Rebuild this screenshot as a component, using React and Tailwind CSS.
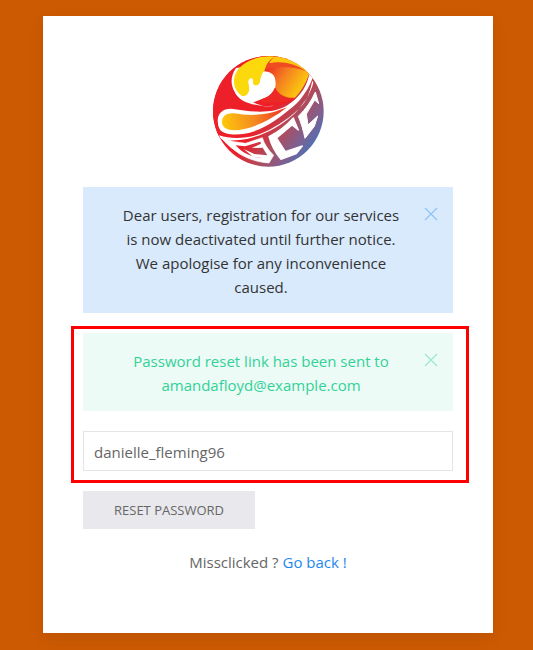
import { useState } from "react";

function Logo() {
  return (
    <svg viewBox="0 0 333 333" className="size-[111px]" role="img" aria-label="GCC logo">
      <defs>
        <linearGradient id="base" gradientUnits="userSpaceOnUse" x1="125" y1="125" x2="310" y2="265">
          <stop offset="0.25" stopColor="#ed1f29" />
          <stop offset="0.55" stopColor="#b04b5b" />
          <stop offset="0.8" stopColor="#7f6090" />
          <stop offset="1" stopColor="#4a72b8" />
        </linearGradient>
        <linearGradient id="flame" gradientUnits="userSpaceOnUse" x1="165" y1="45" x2="260" y2="105">
          <stop offset="0" stopColor="#ee3a24" />
          <stop offset="0.45" stopColor="#f58220" />
          <stop offset="1" stopColor="#fcc60e" />
        </linearGradient>
        <linearGradient id="drop" gradientUnits="userSpaceOnUse" x1="30" y1="200" x2="215" y2="170">
          <stop offset="0" stopColor="#fdc60b" />
          <stop offset="0.5" stopColor="#f58a20" />
          <stop offset="1" stopColor="#ed3324" />
        </linearGradient>
        <clipPath id="disc">
          <circle cx="166" cy="166" r="166" />
        </clipPath>
      </defs>
      <g clipPath="url(#disc)">
        <rect width="333" height="333" fill="url(#base)" />
        <path d="M0 0 H200 L150 150 L60 240 L0 240Z" fill="#ed1f29" />
        <path d="M69 36 C44 72 56 112 92 132 C120 147 150 153 180 150 L200 110 L190 60 L120 30Z" fill="#fff" />
        <path d="M65 146 C105 150 130 150 150 150 C200 150 225 145 250 128 L215 110 L185 95 C178 115 163 124 146 129 C130 138 100 146 65 146Z" fill="#ed1f29" />
        <path d="M92 120 C110 134 130 148 165 150 C110 148 80 135 66 110Z" fill="#fff" />
        <path d="M150 46 C156 20 170 3 189 0 C230 0 266 22 289 52 C280 80 264 108 246 125 C218 138 180 138 150 134 C176 124 190 104 187 80 C184 60 170 48 150 46Z" fill="url(#flame)" />
        <path d="M189 0 C230 0 266 22 289 52 C254 26 212 16 168 22 Q177 6 189 0Z" fill="#fdc90e" />
        <path d="M168 22 C205 14 245 22 280 46 C238 30 196 30 157 40Z" fill="#f04b23" />
        <path d="M146 129 C172 122 182 108 187 95 C196 116 220 128 246 125 C222 139 190 142 146 140Z" fill="#ed2926" />
        <path d="M86 119 C60 101 54 66 78 37 C103 8 150 -3 187 2 C158 12 158 44 150 51 C140 66 144 78 138 84 C131 93 119 90 119 78 C120 70 114 64 108 71 C102 80 112 93 108 105 C104 119 93 123 86 119Z" fill="#fbd90c" />
        <path d="M108 79 C104 67 117 62 120 72 C117 84 124 93 137 86 C143 80 141 63 151 47 C174 44 191 60 187 85 C183 110 158 130 132 130 C115 130 98 126 92 121 C104 120 109 112 109 103 C111 95 108 90 108 79Z" fill="#fff" />
        <path d="M14 195 C14 169 34 156 60 159 C92 164 126 169 164 166 C209 163 234 144 258 118 C276 98 284 77 289 55 L299 65 C286 101 264 132 238 154 C202 183 166 213 120 227 C86 238 38 240 21 221 Q14 210 14 195Z" fill="#fff" />
        <path d="M27 198 C27 179 42 170 64 172 C103 179 158 182 222 154 C181 187 132 212 91 220 C53 227 27 220 27 198Z" fill="url(#drop)" />
        <path d="M18 238 C60 252 112 247 153 229 C193 210 239 181 269 146 C285 126 293 98 298 74 L301 80 C293 114 267 151 240 177 C206 207 160 234 117 245 C83 254 42 256 24 249Z" fill="#fff" />
        <g strokeLinejoin="round">
          <path d="M24 245 L62 257 L98 262 L148 245 C154 264 165 281 182 298 L168 321 C136 319 106 309 80 294 Q48 273 24 245Z" fill="#fff" stroke="#fff" strokeWidth="2" />
          <path d="M68 268 L96 271 L142 257 L144 263 L116 276 L149 275 L163 298 L124 294 L92 279 L118 301 L150 307 C114 304 86 290 68 268Z" fill="url(#base)" />
          <path d="M168 242 C198 227 222 207 241 186 L256 222 L237 207 L191 246 L217 287 L268 270 L250 293 L204 310 C188 292 175 268 168 242Z" fill="#fff" stroke="#fff" strokeWidth="4" />
          <path d="M256 181 C279 158 295 136 307 108 L317 143 L305 132 L280 174 L285 207 L314 180 L304 211 L276 247 C271 224 265 202 256 181Z" fill="#fff" stroke="#fff" strokeWidth="3" />
        </g>
      </g>
    </svg>
  );
}

function Alert({ tone, close, onClose, children }) {
  return (
    <div role="status" className={`flex items-start pt-4 pr-[15px] pb-[14px] pl-[29px] ${tone}`}>
      <p className="flex-1 pr-[10px] pl-1 text-center">{children}</p>
      <button type="button" aria-label="Close" onClick={onClose} className={`mt-1 ml-2 ${close}`}>
        <svg width="14" height="14" viewBox="0 0 14 14" fill="none" stroke="currentColor" strokeWidth="1.1">
          <path d="M1 1 13 13M13 1 1 13" />
        </svg>
      </button>
    </div>
  );
}

export default function App() {
  const [notice, setNotice] = useState(true);
  const [sent, setSent] = useState(true);
  return (
    <div className="min-h-screen bg-[#cc5a02] py-4 pr-10 pl-[43px] font-['Open_Sans','Noto_Sans',sans-serif] text-[15px] leading-6 text-[#666]">
      <main className="mx-auto max-w-[450px] bg-white px-10 pt-10 pb-[59px] shadow-[0_5px_15px_rgba(0,0,0,0.08)]">
        <div className="mb-5 flex justify-center">
          <Logo />
        </div>
        {notice && (
          <Alert tone="bg-[#d8eafc] text-[#333]" close="text-[#8bc1f8]" onClose={() => setNotice(false)}>
            Dear users, registration for our services is now deactivated until further notice. We apologise for any
            inconvenience caused.
          </Alert>
        )}
        <form onSubmit={(e) => e.preventDefault()}>
          <div className="relative mt-5 flex flex-col gap-5">
            {sent && (
              <Alert tone="bg-[#edfbf6] text-[#32d296]" close="text-[#98e8ca]" onClose={() => setSent(false)}>
                Password reset link has been sent to amandafloyd@example.com
              </Alert>
            )}
            <input
              type="text"
              aria-label="Username"
              defaultValue="danielle_fleming96"
              className="h-10 w-full border border-[#e5e5e5] bg-white px-[10px] pt-[2px] outline-none"
            />
            <div className="pointer-events-none absolute -top-[7px] -right-4 -bottom-3 -left-3 border-[3px] border-[#ff0000]" />
          </div>
          <button type="submit" className="mt-5 h-[38px] bg-[#e8e8ed] px-[31px] text-[13px] uppercase">
            Reset password
          </button>
        </form>
        <p className="mt-[21px] text-center">
          Missclicked ?{" "}
          <a href="#login" className="text-[#1e87f0]">
            Go back !
          </a>
        </p>
      </main>
    </div>
  );
}
